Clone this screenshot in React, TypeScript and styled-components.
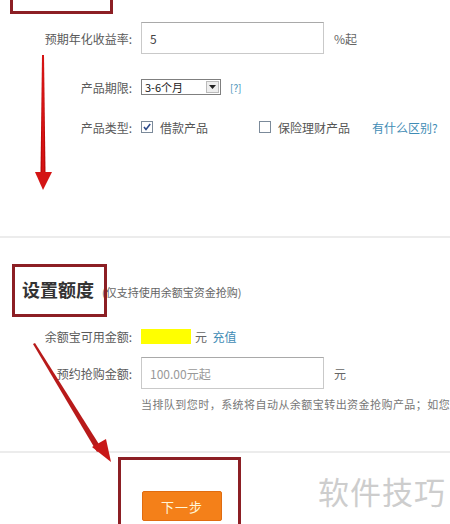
import styled, { createGlobalStyle } from "styled-components";

const GlobalStyle = createGlobalStyle`
  html, body { margin: 0; padding: 0; background: #fff; }
  body { font-family: "Noto Sans CJK SC", "Liberation Sans", sans-serif; }
`;

const Page = styled.div`
  position: relative;
  width: 450px;
  height: 524px;
  overflow: hidden;
  background: #fff;
  color: #555;
  font-size: 12px;
`;

const Section = styled.section<{ $height: number; $pad: number }>`
  height: ${(p) => p.$height}px;
  padding-top: ${(p) => p.$pad}px;
  box-sizing: border-box;
  display: flex;
  flex-direction: column;
`;

const Divider = styled.div`
  height: 2px;
  background: #ececec;
`;

const Row = styled.div<{ $top: number; $h: number }>`
  display: flex;
  align-items: center;
  height: ${(p) => p.$h}px;
  margin-top: ${(p) => p.$top}px;
  gap: 9px;
  white-space: nowrap;
`;

const Label = styled.span`
  width: 132px;
  text-align: right;
  color: #5a5a5a;
  font-size: 12px;
  flex-shrink: 0;
`;

const TextInput = styled.div<{ $placeholder?: boolean }>`
  width: 183px;
  height: 32px;
  box-sizing: border-box;
  border: 1px solid #c9c9c9;
  border-top-color: #a9a9a9;
  padding-left: 8px;
  display: flex;
  align-items: center;
  font-size: 12px;
  color: ${(p) => (p.$placeholder ? "#999" : "#444")};
`;

const Unit = styled.span`
  color: #666;
  margin-left: 1px;
`;

const Select = styled.div`
  width: 80px;
  height: 16px;
  box-sizing: border-box;
  border: 1px solid #7f7f7f;
  display: flex;
  align-items: center;
  justify-content: space-between;
  padding-left: 3px;
  font-size: 11px;
  color: #222;
`;

const SelectBtn = styled.span`
  width: 13px;
  height: 12px;
  margin-right: 1px;
  border: 1px solid #bbb;
  box-sizing: border-box;
  background: #eee;
  display: flex;
  align-items: center;
  justify-content: center;
`;

const Link = styled.span<{ $size?: number }>`
  color: #3f8cb5;
  font-size: ${(p) => p.$size ?? 12}px;
`;

const Check = styled.label<{ $gap: number }>`
  display: flex;
  align-items: center;
  gap: 7px;
  margin-right: ${(p) => p.$gap}px;
  color: #555;
  font-size: 12px;
`;

const Heading = styled.div`
  display: flex;
  align-items: baseline;
  padding-left: 22px;
  gap: 8px;
  height: 26px;
`;

const HeadTitle = styled.span`
  font-size: 18px;
  font-weight: 700;
  color: #333;
`;

const HeadNote = styled.span`
  font-size: 11px;
  color: #666;
`;

const Amount = styled.span`
  display: flex;
  align-items: center;
`;

const Balance = styled.span`
  width: 50px;
  height: 15px;
  margin-right: 3px;
  background: #ffff00;
`;

const Hint = styled.div`
  margin-top: 8px;
  padding-left: 141px;
  height: 14px;
  line-height: 14px;
  font-size: 11px;
  letter-spacing: 0.45px;
  color: #777;
  white-space: nowrap;
`;

const Footer = styled.section`
  padding-top: 38px;
  padding-left: 142px;
`;

const NextButton = styled.button`
  width: 80px;
  height: 30px;
  border: 1px solid #e06c10;
  border-radius: 2px;
  background: #f48019;
  color: #fff6d8;
  font-size: 13px;
  font-family: inherit;
  letter-spacing: 1px;
`;

const Frame = styled.div<{ $l: number; $t: number; $w: number; $h: number }>`
  position: absolute;
  left: ${(p) => p.$l}px;
  top: ${(p) => p.$t}px;
  width: ${(p) => p.$w}px;
  height: ${(p) => p.$h}px;
  border: 3px solid #8c1f24;
  box-sizing: border-box;
  pointer-events: none;
`;

const Arrows = styled.svg`
  position: absolute;
  left: 0;
  top: 0;
  pointer-events: none;
`;

const Watermark = styled.div`
  position: absolute;
  left: 318px;
  top: 468px;
  font-size: 31px;
  letter-spacing: 1px;
  color: #cdcdcd;
`;

function Box({ checked }: { checked?: boolean }) {
  return (
    <svg width="12" height="12" viewBox="0 0 12 12">
      <rect x="0.5" y="0.5" width="11" height="11" fill="#fff" stroke="#7b8a9a" />
      {checked && (
        <path d="M3 6 L5 8.5 L9.2 3" fill="none" stroke="#2d4a8a" strokeWidth="1.6" />
      )}
    </svg>
  );
}

export default function App() {
  return (
    <Page>
      <GlobalStyle />
      <Section $height={236} $pad={22}>
        <Row $top={0} $h={32}>
          <Label>预期年化收益率:</Label>
          <TextInput>5</TextInput>
          <Unit>%起</Unit>
        </Row>
        <Row $top={25} $h={16}>
          <Label>产品期限:</Label>
          <Select>
            3-6个月
            <SelectBtn>
              <svg width="7" height="4" viewBox="0 0 7 4">
                <path d="M0 0 H7 L3.5 4 Z" fill="#222" />
              </svg>
            </SelectBtn>
          </Select>
          <Link $size={10}>[?]</Link>
        </Row>
        <Row $top={24} $h={16}>
          <Label>产品类型:</Label>
          <Check $gap={42}>
            <Box checked />
            借款产品
          </Check>
          <Check $gap={13}>
            <Box />
            保险理财产品
          </Check>
          <Link>有什么区别?</Link>
        </Row>
      </Section>
      <Divider />
      <Section $height={213} $pad={38}>
        <Heading>
          <HeadTitle>设置额度</HeadTitle>
          <HeadNote>(仅支持使用余额宝资金抢购)</HeadNote>
        </Heading>
        <Row $top={26} $h={16}>
          <Label>余额宝可用金额:</Label>
          <Amount>
            <Balance />
            <Unit>元</Unit>
            <Link>&nbsp;&nbsp;充值</Link>
          </Amount>
        </Row>
        <Row $top={13} $h={32}>
          <Label>预约抢购金额:</Label>
          <TextInput $placeholder>100.00元起</TextInput>
          <Unit>元</Unit>
        </Row>
        <Hint>当排队到您时，系统将自动从余额宝转出资金抢购产品；如您</Hint>
      </Section>
      <Divider />
      <Footer>
        <NextButton>下一步</NextButton>
      </Footer>

      <Frame $l={10} $t={-10} $w={103} $h={24} />
      <Frame $l={12} $t={264} $w={95} $h={53} />
      <Frame $l={118} $t={457} $w={123} $h={80} />

      <Arrows width="450" height="524" viewBox="0 0 450 524">
        <defs>
          <linearGradient id="shaft" x1="0" x2="1" y1="0" y2="0">
            <stop offset="0" stopColor="#a00" />
            <stop offset="0.5" stopColor="#e01818" />
            <stop offset="1" stopColor="#a00" />
          </linearGradient>
        </defs>
        <polygon points="42,55 44,55 45.5,174 40.5,174" fill="url(#shaft)" />
        <polygon points="35,172 52,172 43,190" fill="#d41414" />
        <polygon points="33,344 35,343 102,449 97,452" fill="#b81a1a" />
        <polygon points="92,447 106,439 111,462" fill="#c81818" />
      </Arrows>

      <Watermark>软件技巧</Watermark>
    </Page>
  );
}
